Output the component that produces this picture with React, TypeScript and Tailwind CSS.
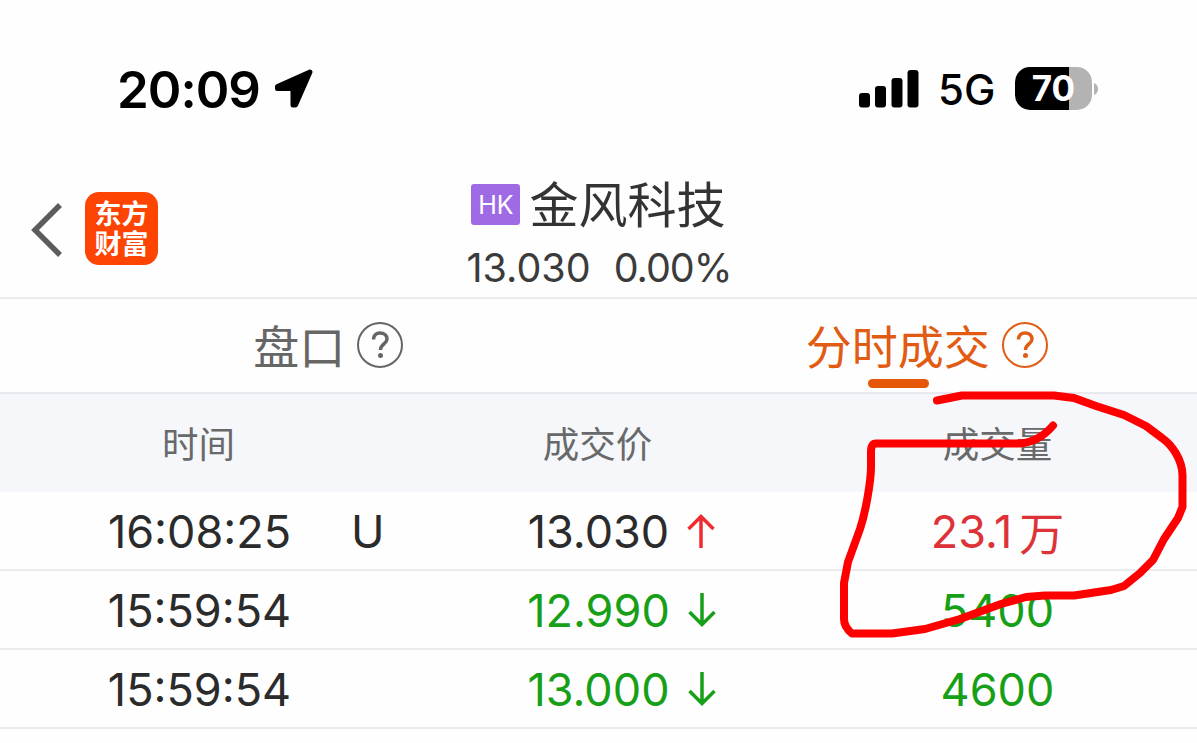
import clsx from 'clsx';

interface Trade {
  time: string;
  flag?: string;
  price: string;
  priceColor: string;
  direction: 'up' | 'down';
  volume: string;
  unit?: string;
  volumeColor: string;
}

const trades: Trade[] = [
  {
    time: '16:08:25',
    flag: 'U',
    price: '13.030',
    priceColor: 'text-[#2b2b2b]',
    direction: 'up',
    volume: '23.1',
    unit: '万',
    volumeColor: 'text-[#dd3237]',
  },
  {
    time: '15:59:54',
    price: '12.990',
    priceColor: 'text-[#17a017]',
    direction: 'down',
    volume: '5400',
    volumeColor: 'text-[#17a017]',
  },
  {
    time: '15:59:54',
    price: '13.000',
    priceColor: 'text-[#17a017]',
    direction: 'down',
    volume: '4600',
    volumeColor: 'text-[#17a017]',
  },
];

const StatusBar = () => (
  <div className="flex h-[170px] justify-between pt-[58px] pr-[98px] pl-[117px]">
    <div className="flex h-[62px] items-center">
      <span className="w-[144px] text-[51px] leading-none font-semibold tracking-[-1px] whitespace-nowrap">20:09</span>
      <svg width="42" height="42" viewBox="0 0 42 42" className="ml-[12px]">
        <path
          d="M4.500 18.500 37 4 22.500 37 20 37V20.500H4.500Z"
          fill="#000"
          stroke="#000"
          strokeWidth="5"
          strokeLinejoin="round"
        />
      </svg>
    </div>
    <div className="flex h-[62px] items-center">
      <svg width="60" height="38" viewBox="0 0 60 38">
        <rect x="0" y="23" width="11" height="14.5" rx="3" />
        <rect x="16" y="16" width="11" height="21.5" rx="3" />
        <rect x="32.5" y="8" width="11" height="29.5" rx="3" />
        <rect x="48.5" y="0" width="11" height="37.5" rx="3" />
      </svg>
      <span className="mt-[2px] ml-[19px] w-[58px] text-[42px] leading-none font-medium whitespace-nowrap">5G</span>
      <div className="mb-[2px] ml-[19px] flex h-[43px] w-[77px] items-center justify-center overflow-hidden rounded-[15px] bg-linear-to-r from-black from-70% to-[#b3b3b3] to-70% text-[35px] font-bold text-white">
        70
      </div>
      <svg width="5" height="14" viewBox="0 0 5 14" className="ml-[2px]">
        <path d="M0 1C5.500 3 5.500 11 0 13Z" fill="#b3b3b3" />
      </svg>
    </div>
  </div>
);

const Header = () => (
  <div className="grid h-[129px] grid-cols-[1fr_auto_1fr] border-b-2 border-[#ebebec]">
    <div className="flex items-start pt-[22px] pl-[31px]">
      <svg width="32" height="54" viewBox="0 0 32 54" className="mt-[11px]">
        <path d="M29 2 4 27 29 52" fill="none" stroke="#5b5c5e" strokeWidth="5.500" />
      </svg>
      <div className="ml-[22px] flex h-[73px] w-[73px] flex-col items-center justify-center rounded-[14px] bg-[#fd4403] pt-[3px] text-[27px] leading-[30px] font-bold text-white">
        <span>东方</span>
        <span>财富</span>
      </div>
    </div>
    <div className="flex flex-col items-center">
      <div className="mt-[5px] flex h-[58px] items-center">
        <span className="flex h-[41px] w-[49px] items-center justify-center rounded-[3px] bg-[#9f6be5] pt-[3px] text-[25px] text-white">
          HK
        </span>
        <span className="mt-[2px] ml-[9px] text-[49px] leading-none whitespace-nowrap text-[#333]">金风科技</span>
      </div>
      <div className="mt-[13px] flex gap-[23px] pl-[1px] text-[39.500px] leading-[44px] text-[#3b3b3b]">
        <span>13.030</span>
        <span className="tracking-[-1px]">0.00%</span>
      </div>
    </div>
  </div>
);

const HelpIcon = () => (
  <svg width="48" height="48" viewBox="0 0 48 48" fill="none" stroke="currentColor">
    <circle cx="24" cy="24" r="22" strokeWidth="2" />
    <path
      d="M17.500 18.500C17.500 14 20.500 12 24 12C28 12 31 14.500 31 18C31 23 24.500 23 24.500 29"
      strokeWidth="3.500"
    />
    <circle cx="24.500" cy="34.500" r="2.500" fill="currentColor" stroke="none" />
  </svg>
);

const Tab = ({ label, active }: { label: string; active?: boolean }) => (
  <div
    className={clsx(
      'grid grid-cols-[1fr_auto_1fr]',
      active ? 'text-[#e25b12]' : 'text-[#666]'
    )}
  >
    <div />
    <div className="flex flex-col items-center">
      <span className="mt-[16px] text-[46px] leading-[64px] whitespace-nowrap">{label}</span>
      {active && <div className="ml-[2px] h-[9px] w-[61px] rounded-full bg-[#e65608]" />}
    </div>
    <div className="pt-[22px] pl-[11px]">
      <HelpIcon />
    </div>
  </div>
);

const Arrow = ({ direction }: { direction: 'up' | 'down' }) => (
  <svg
    width="28"
    height="34"
    viewBox="0 0 28 34"
    fill="none"
    strokeWidth="3.500"
    className={direction === 'up' ? 'stroke-[#f02b30]' : 'rotate-180 stroke-[#17a017]'}
  >
    <path d="M14 34V3M1.500 15 14 2.500 26.500 15" />
  </svg>
);

const TradeRow = ({ trade }: { trade: Trade }) => (
  <div className="grid h-[79px] grid-cols-3 border-b-2 border-[#ebebec] text-[45px] leading-[79px]">
    <div className="grid grid-cols-[1fr_auto_1fr] text-[#2b2b2b]">
      <span />
      <span>{trade.time}</span>
      <span className="pl-[60px]">{trade.flag}</span>
    </div>
    <div className={clsx('grid grid-cols-[1fr_auto_1fr] items-center', trade.priceColor)}>
      <span />
      <span>{trade.price}</span>
      <span className="pb-[2px] pl-[18px]">
        <Arrow direction={trade.direction} />
      </span>
    </div>
    <div className={clsx('flex justify-center', trade.volumeColor)}>
      <span>{trade.volume}</span>
      {trade.unit && <span className="ml-[7px] font-['Noto_Sans_CJK_SC',sans-serif]">{trade.unit}</span>}
    </div>
  </div>
);

// freehand circle drawn around the volume cell
const Marker = () => (
  <svg
    width="1197"
    height="743"
    viewBox="0 0 1197 743"
    className="pointer-events-none absolute inset-0"
    fill="none"
    stroke="#fe0000"
    strokeWidth="8"
    strokeLinecap="round"
    strokeLinejoin="round"
  >
    <path d="M937 400.500 962 395.500H1054L1074 398 1096 406 1124 415 1146 426 1162 438C1172 445 1182 459 1182.500 475V507L1178 518 1164 539 1153 560 1140 573 1124 586 1111 590 1074 595.500H1045L1026 597 1001 604 960 619 925 629 892 633.500H852Q844 627 844 619V583L848 562 860 529C866 511 871 480 871 467V452Q871 443.500 876 443.500H1020Q1039 442 1053 425.500" />
  </svg>
);

const App = () => {
  return (
    <div className="relative h-[743px] w-[1197px] overflow-hidden bg-[#fefefe] font-['Inter','Noto_Sans_CJK_SC',sans-serif]">
      <StatusBar />
      <Header />
      <div className="grid h-[95px] grid-cols-2 border-b-2 border-[#e8e8ee]">
        <Tab label="盘口" />
        <Tab label="分时成交" active />
      </div>
      <div className="grid h-[98px] grid-cols-3 bg-[#f6f7fa] text-center text-[36.500px] leading-[102px] text-[#68696b]">
        <span className="pr-[2px]">时间</span>
        <span className="pr-[2px]">成交价</span>
        <span>成交量</span>
      </div>
      {trades.map((trade, i) => (
        <TradeRow key={i} trade={trade} />
      ))}
      <Marker />
    </div>
  );
};

export default App;
